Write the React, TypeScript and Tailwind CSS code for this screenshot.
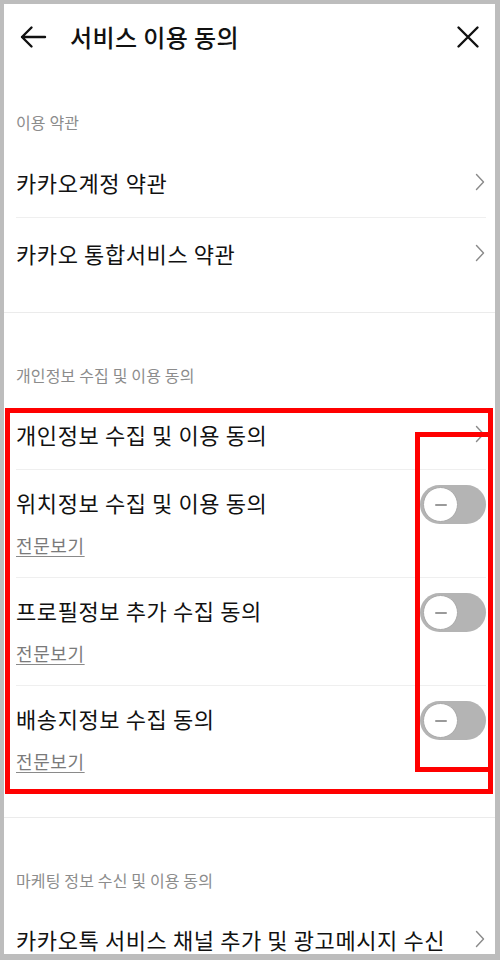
import { Fragment } from 'react'

type ConsentItem = {
  title: string
}

const terms = ['카카오계정 약관', '카카오 통합서비스 약관']

const privacyItems: ConsentItem[] = [
  { title: '위치정보 수집 및 이용 동의' },
  { title: '프로필정보 추가 수집 동의' },
  { title: '배송지정보 수집 동의' },
]

const font = "font-['Noto_Sans_CJK_KR','Noto_Sans',sans-serif]"

function Chevron() {
  return (
    <svg width="10" height="18" viewBox="0 0 10 18" fill="none" className="shrink-0">
      <path d="M1.5 1.5 L8.5 9 L1.5 16.5" stroke="#8a8a8a" strokeWidth="1.4" strokeLinecap="round" strokeLinejoin="round" />
    </svg>
  )
}

function Toggle() {
  return (
    <div className="w-[66px] h-[39px] rounded-full bg-[#b4b4b4] flex items-center pl-[3px] shrink-0">
      <div className="w-[35px] h-[35px] rounded-full bg-white border border-[#a9a9a9] flex items-center justify-center">
        <div className="w-[12px] h-[2px] bg-[#9a9a9a] rounded-full" />
      </div>
    </div>
  )
}

function SectionLabel({ children }: { children: string }) {
  return (
    <div className="pt-[52px] pb-[14px] pl-[12px]">
      <p className="text-[16px] leading-[20px] tracking-[0.15px] text-[#8c8c8c]">{children}</p>
    </div>
  )
}

function LinkRow({ title }: { title: string }) {
  return (
    <div className="h-[70px] flex items-center justify-between pr-[1px]">
      <p className="text-[22px] leading-[28px] tracking-[0.6px] text-[#111]">{title}</p>
      <Chevron />
    </div>
  )
}

function ToggleRow({ title }: { title: string }) {
  return (
    <div className="h-[107px] flex justify-between">
      <div className="pt-[18px]">
        <p className="text-[22px] leading-[28px] tracking-[0.6px] text-[#111]">{title}</p>
        <p className="mt-[18px] text-[18px] leading-[22px] tracking-[0.6px] text-[#7a7a7a] underline underline-offset-[3px] decoration-[#8a8a8a]">
          전문보기
        </p>
      </div>
      <div className="pt-[15px]">
        <Toggle />
      </div>
    </div>
  )
}

export default function App() {
  return (
    <div className={`w-[500px] h-[960px] bg-[#bdbdbd] pt-[4px] pl-[4px] pr-[5px] pb-[6px] ${font}`}>
      <div className="relative h-full bg-white overflow-hidden">
        {/* Header */}
        <div className="h-[66px] flex items-center pl-[15px] pr-[15px]">
          <svg width="28" height="24" viewBox="0 0 28 24" fill="none">
            <path d="M26 12 H3 M12.5 2.5 L3 12 L12.5 21.5" stroke="#111" strokeWidth="2.4" strokeLinecap="round" strokeLinejoin="round" />
          </svg>
          <h1 className="ml-[23px] flex-1 text-[24px] leading-[30px] tracking-[0.4px] font-medium text-[#111]">서비스 이용 동의</h1>
          <svg width="24" height="24" viewBox="0 0 24 24" fill="none">
            <path d="M2.5 2.5 L21.5 21.5 M21.5 2.5 L2.5 21.5" stroke="#111" strokeWidth="2.4" strokeLinecap="round" />
          </svg>
        </div>

        {/* 이용 약관 */}
        <div className="pb-[24px]">
          <div className="pt-[42px] pb-[15px] pl-[12px]">
            <p className="text-[16px] leading-[20px] tracking-[0.15px] text-[#8c8c8c]">이용 약관</p>
          </div>
          <div className="pl-[12px] pr-[9px]">
            {terms.map((t, i) => (
              <Fragment key={t}>
                {i > 0 && <div className="h-px bg-[#efefef]" />}
                <LinkRow title={t} />
              </Fragment>
            ))}
          </div>
        </div>
        <div className="h-px bg-[#ebebeb]" />

        {/* 개인정보 */}
        <div className="pb-[24px]">
          <SectionLabel>개인정보 수집 및 이용 동의</SectionLabel>
          <div className="pl-[12px] pr-[9px]">
            <LinkRow title="개인정보 수집 및 이용 동의" />
            {privacyItems.map((item) => (
              <Fragment key={item.title}>
                <div className="h-px bg-[#efefef]" />
                <ToggleRow title={item.title} />
              </Fragment>
            ))}
          </div>
        </div>
        <div className="h-px bg-[#ebebeb]" />

        {/* 마케팅 */}
        <SectionLabel>마케팅 정보 수신 및 이용 동의</SectionLabel>
        <div className="pl-[12px] pr-[9px]">
          <LinkRow title="카카오톡 서비스 채널 추가 및 광고메시지 수신" />
        </div>

        {/* annotation boxes */}
        <div className="absolute left-[1px] top-[404px] w-[488px] h-[386px] border-[5px] border-[#ff0000]" />
        <div className="absolute left-[411px] top-[428px] w-[78px] h-[340px] border-[5px] border-[#ff0000]" />
      </div>
    </div>
  )
}
